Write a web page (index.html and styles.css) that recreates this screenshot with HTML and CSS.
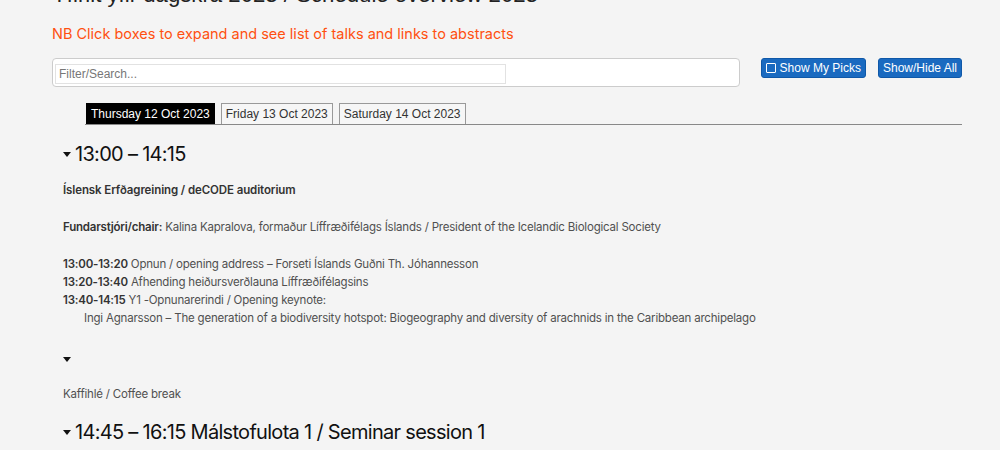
FILE: index.html
```html
<!DOCTYPE html>
<html lang="is">
<head>
  <meta charset="UTF-8" />
  <title>Líffræðiráðstefnan 2023 – dagskrá</title>
  <link rel="stylesheet" href="styles.css">
</head>
<body>
  <main class="page">
    <h1 class="title">Yfirlit yfir dagskrá 2023 / Schedule overview 2023</h1>
    <p class="notice">NB Click boxes to expand and see list of talks and links to abstracts</p>

    <div class="toolbar">
      <div class="search">
        <input type="text" placeholder="Filter/Search...">
      </div>
      <button class="btn"><span class="box"></span>Show My Picks</button>
      <button class="btn">Show/Hide All</button>
    </div>

    <div class="tabs">
      <button class="tab active">Thursday 12 Oct 2023</button>
      <button class="tab">Friday 13 Oct 2023</button>
      <button class="tab">Saturday 14 Oct 2023</button>
    </div>

    <section class="slot">
      <h2 class="slot-head"><span class="caret"></span>13:00 – 14:15</h2>
      <p class="room">Íslensk Erfðagreining / deCODE auditorium</p>
      <p class="line"><b>Fundarstjóri/chair:</b> Kalina Kapralova, formaður Líffræðifélags Íslands / President of the Icelandic Biological Society</p>
      <ul class="talks">
        <li><b>13:00-13:20</b> Opnun / opening address – Forseti Íslands Guðni Th. Jóhannesson</li>
        <li><b>13:20-13:40</b> Afhending heiðursverðlauna Líffræðifélagsins</li>
        <li><b>13:40-14:15</b> Y1 -Opnunarerindi / Opening keynote:</li>
        <li class="sub">Ingi Agnarsson – The generation of a biodiversity hotspot: Biogeography and diversity of arachnids in the Caribbean archipelago</li>
      </ul>
    </section>

    <section class="slot">
      <h2 class="slot-head empty"><span class="caret"></span></h2>
      <p class="line break">Kaffihlé / Coffee break</p>
    </section>

    <section class="slot">
      <h2 class="slot-head next"><span class="caret"></span>14:45 – 16:15 Málstofulota 1 / Seminar session 1</h2>
    </section>
  </main>
</body>
</html>
```

FILE: styles.css
```css
body {
  margin: 0;
  background: #f4f4f4;
  color: #505050;
  font-family: Inter, "Liberation Sans", sans-serif;
  overflow: hidden;
}
.page {
  width: 910px;
  margin-left: 52px;
}
.title {
  margin: -20px 0 0;
  font-family: "Liberation Sans", sans-serif;
  font-weight: normal;
  font-size: 22.2px;
  line-height: 30px;
  color: #222;
  white-space: nowrap;
}
.notice {
  margin: 15px 0 0;
  font-size: 14.5px;
  line-height: 18px;
  color: #ff5010;
}
.toolbar {
  display: flex;
  align-items: flex-start;
  margin-top: 15px;
}
.search {
  flex: 1;
  height: 29px;
  background: #fff;
  border: 1px solid #ccc;
  border-radius: 4px;
  padding: 3px 0 0 2px;
  box-sizing: border-box;
}
.search input {
  width: 451px;
  height: 20px;
  box-sizing: border-box;
  border: 1px solid #e2e2e2;
  padding: 0 3px;
  font-family: "Liberation Sans", sans-serif;
  font-size: 12px;
  color: #333;
}
.search input::placeholder {
  color: #777;
}
.btn {
  flex-shrink: 0;
  height: 20px;
  padding: 0 4px;
  background: #1a6ac0;
  border: 1px solid #0f58a8;
  border-radius: 3px;
  color: #fff;
  font-family: "Liberation Sans", sans-serif;
  font-size: 12px;
  white-space: nowrap;
  display: flex;
  align-items: center;
  margin-left: 21px;
}
.btn + .btn {
  margin-left: 12px;
}
.box {
  width: 8px;
  height: 8px;
  border: 1px solid #fff;
  border-radius: 1px;
  margin-right: 4px;
}
.tabs {
  display: flex;
  gap: 6px;
  margin: 16px 0 0 33px;
  padding-left: 1px;
  border-bottom: 1px solid #888;
}
.tab {
  height: 21px;
  padding: 0 4px;
  background: #f6f6f6;
  border: 1px solid #999;
  border-bottom: none;
  font-family: "Liberation Sans", sans-serif;
  font-size: 12px;
  color: #333;
}
.tab.active {
  background: #000;
  border-color: #000;
  color: #fff;
}
.slot {
  padding-left: 11px;
}
.slot-head {
  display: flex;
  align-items: center;
  margin: 17px 0 0;
  height: 24px;
  font-size: 20px;
  font-weight: normal;
  letter-spacing: -0.7px;
  color: #111;
}
.slot-head.empty {
  margin-top: 20px;
}
.slot-head.next {
  margin-top: 17px;
}
.caret {
  width: 0;
  height: 0;
  border-left: 4.5px solid transparent;
  border-right: 4.5px solid transparent;
  border-top: 5px solid #111;
  margin-right: 4px;
}
.room {
  margin: 17px 0 0;
  font-size: 11.5px;
  font-weight: 600;
  letter-spacing: -0.1px;
  color: #333;
}
.line {
  margin: 21px 0 0;
  font-size: 11.5px;
  letter-spacing: -0.2px;
  line-height: 18px;
}
.line.break {
  margin-top: 14px;
}
.line b, .talks b {
  color: #333;
  font-weight: 600;
}
.talks {
  list-style: none;
  margin: 19px 0 0;
  padding: 0;
  font-size: 11.5px;
  letter-spacing: -0.2px;
  line-height: 18px;
}
.talks .sub {
  padding-left: 21px;
}
```
